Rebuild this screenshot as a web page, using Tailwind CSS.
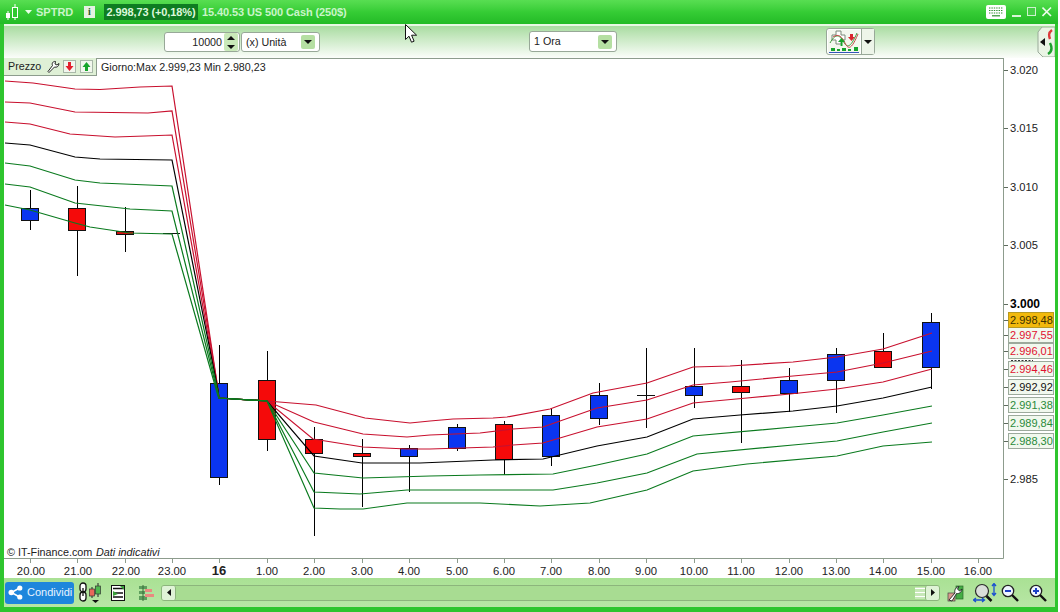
<!DOCTYPE html>
<html lang="it">
<head>
<meta charset="utf-8">
<script src="https://cdn.jsdelivr.net/npm/@tailwindcss/browser@4"></script>
<title>SPTRD</title>
</head>
<body class="bg-white overflow-hidden">
<div class="relative w-[1058px] h-[612px] flex flex-col bg-[#2ec52e] font-['Liberation_Sans',Arial,sans-serif] overflow-hidden">

  <!-- Title bar -->
  <header class="h-[24px] shrink-0 flex items-center bg-gradient-to-b from-[#58de52] via-[#35cc35] to-[#22bb26] text-[11px] font-bold text-[#c9f5c9] whitespace-nowrap">
    <svg class="ml-[5px] w-[14px] h-[18px]" viewBox="0 0 14 18">
      <path d="M3 8v9M10 1v16" stroke="#fff" stroke-width="1"/>
      <rect x="1" y="10" width="4" height="5" fill="#fff"/>
      <rect x="7.5" y="4.5" width="5" height="10" fill="#2fc92f" stroke="#fff"/>
    </svg>
    <svg class="ml-[6px] w-[7px] h-[4px]" viewBox="0 0 7 4"><path d="M0 0h7L3.500 4z" fill="#e8ffe8"/></svg>
    <span class="ml-[4px] w-[48px]">SPTRD</span>
    <span class="w-[11px] h-[12px] flex items-center justify-center bg-[#e4f2e2] text-[#2a5a2a] text-[10px] font-bold leading-none font-['Liberation_Serif',serif]">i</span>
    <span class="ml-[9px] w-[94px] h-[16px] flex items-center justify-center bg-[#0e7c22] text-[#dcf8dc] tracking-[-.1px]">2.998,73 (+0,18%)</span>
    <span class="ml-[4px] tracking-[-.1px]">15.40.53 US 500 Cash (250$)</span>
    <div class="ml-auto flex items-center">
      <svg class="w-[20px] h-[14px]" viewBox="0 0 20 14">
        <rect width="20" height="14" rx="2" fill="#fff"/>
        <path d="M3 3h14M3 5.500h14M3 8h14" stroke="#2f8f2f" stroke-width="1.200" stroke-dasharray="1.400 1"/>
        <path d="M6 10.800h8" stroke="#2f8f2f" stroke-width="1.200"/>
      </svg>
      <svg class="ml-[6px] w-[10px] h-[12px]" viewBox="0 0 10 12"><rect y="9" width="9" height="2" fill="#d8f5d8"/></svg>
      <svg class="ml-[5px] w-[10px] h-[12px]" viewBox="0 0 10 12"><rect x=".5" y="1.500" width="8" height="8" fill="#46cf46" stroke="#cdf2cd"/></svg>
      <svg class="ml-[5px] mr-[6px] w-[10px] h-[12px]" viewBox="0 0 10 12"><path d="M.5 1.500l8.500 8.500M9 1.500L.5 10" stroke="#eefcee" stroke-width="1.600"/></svg>
    </div>
  </header>

  <!-- Body framed by the green window border -->
  <div class="flex-1 min-h-0 ml-[4px] mr-[3px] mb-[5px] flex flex-col bg-white">

    <!-- Toolbar -->
    <div class="relative h-[34px] shrink-0 flex items-start border-t-[2px] border-[#e8f8e4] bg-gradient-to-b from-[#a9dca1] to-[#fbfdfa] text-[10.7px] text-[#222]">
      <div class="ml-[160px] mt-[6px] w-[76px] h-[20px] flex items-center justify-between bg-white border border-[#98a898] rounded-[3px]">
        <span class="ml-auto mr-[2px]">10000</span>
        <span class="w-[14px] h-[18px] mr-[1px] flex flex-col items-center justify-around bg-[#c9e9b9] rounded-[2px]">
          <svg class="w-[8px] h-[4px]" viewBox="0 0 8 4"><path d="M0 4h8L4 0z" fill="#111"/></svg>
          <svg class="w-[8px] h-[4px]" viewBox="0 0 8 4"><path d="M0 0h8L4 4z" fill="#111"/></svg>
        </span>
      </div>
      <div class="ml-[1px] mt-[6px] w-[79px] h-[20px] flex items-center bg-white border border-[#98a898] rounded-[3px]">
        <span class="ml-[4px]">(x) Unità</span>
        <span class="ml-auto mr-[4px] w-[14px] h-[14px] flex items-center justify-center bg-[#b5dfa2] rounded-[2px]">
          <svg class="w-[8px] h-[4px]" viewBox="0 0 8 4"><path d="M0 0h8L4 4z" fill="#111"/></svg>
        </span>
      </div>
      <div class="ml-[209px] mt-[5px] w-[88px] h-[21px] flex items-center bg-white border border-[#98a898] rounded-[3px]">
        <span class="ml-[4px]">1 Ora</span>
        <span class="ml-auto mr-[4px] w-[14px] h-[14px] flex items-center justify-center bg-[#b5dfa2] rounded-[2px]">
          <svg class="w-[8px] h-[4px]" viewBox="0 0 8 4"><path d="M0 0h8L4 4z" fill="#111"/></svg>
        </span>
      </div>
      <div class="ml-[209px] mt-[2px] h-[27px] flex bg-white border border-[#98a898] rounded-[3px]">
        <svg class="w-[34px] h-[25px]" viewBox="0 0 34 25">
          <rect x="1" y="1" width="32" height="23" fill="#f3f8ef"/>
          <path d="M9 2h5v4h4v5h-4v4H9v-4H5V6h4z" fill="#fff" stroke="#7a8a7a"/>
          <path d="M3 14c5-9 9-9 13-2s7 8 14-8" fill="none" stroke="#3b9c3b"/>
          <path d="M6 8c6-4 9 0 12 6s6 8 13-9" fill="none" stroke="#c64a4a"/>
          <path d="M14 13l-3 0 3.500-4 3.500 4h-2.500v4h-2z" fill="#17a52c"/>
          <path d="M23 5h3v3h2l-3.500 4L21 8h2z" fill="#d8252d"/>
          <path d="M4 19h4v3H4zM10 20h3v2h-3zM15 19h4v3h-4zM21 20h3v2h-3zM27 18h4v4h-4z" fill="#18a52e"/>
          <path d="M2 23.500h30" stroke="#3357b8"/>
        </svg>
        <span class="w-[13px] flex items-center justify-center border-l border-[#98a898] bg-[#edf5e9]">
          <svg class="w-[8px] h-[4px]" viewBox="0 0 8 4"><path d="M0 0h8L4 4z" fill="#111"/></svg>
        </span>
      </div>
      <svg class="absolute right-0 top-[1px] w-[18px] h-[30px]" viewBox="0 0 18 30">
        <path d="M18 0H5L1 5v20l5 5h12z" fill="#eaf5e5" stroke="#9aaa9a"/>
        <path d="M3 15l5-4v8z" fill="#111"/>
        <path d="M15 3c-4 3-3 6-2 9" fill="none" stroke="#dc3a3a" stroke-width="2.400"/>
        <path d="M11 27c5-3 4-7 2-11" fill="none" stroke="#1e9f2f" stroke-width="2.400"/>
      </svg>
    </div>

    <!-- Chart and axes -->
    <div class="relative flex-1 min-h-0">
      <svg class="absolute inset-0 w-[1051px] h-[520px]" viewBox="4 58 1051 520" font-family="Liberation Sans, Arial, sans-serif">
        <!-- frame -->
        <path d="M1003.500 58V558.500H4" fill="none" stroke="#8d9c8d"/>
        <path d="M4 58.500H1003" stroke="#8d9c8d"/>
        <!-- price ticks -->
        <g stroke="#5e6b5e">
          <path d="M1004 70.500h4M1004 128.500h4M1004 187.500h4M1004 245.500h4M1004 304.500h4M1004 320.500h4M1004 335.500h4M1004 351.500h4M1004 369.500h4M1004 387.500h4M1004 405.500h4M1004 423.500h4M1004 441.500h4M1004 479.500h4"/>
        </g>
        <!-- time ticks -->
        <path d="M30.500 559v4M77.500 559v4M125.500 559v4M172.500 559v4M219.500 559v4M267.500 559v4M314.500 559v4M362.500 559v4M409.500 559v4M457.500 559v4M504.500 559v4M551.500 559v4M599.500 559v4M646.500 559v4M694.500 559v4M741.500 559v4M789.500 559v4M836.500 559v4M883.500 559v4M931.500 559v4M978.500 559v4" stroke="#8d9c8d"/>

        <!-- wicks -->
        <path stroke="#000" stroke-width="1" d="M30.500 190V230M77.500 186V276M125.500 207V252M219.500 345V485M267.500 351V451M314.500 427V536M362.500 439V507M409.500 445V492M457.500 424V451M504.500 421V475M551.500 408V466M599.500 383V425M646.500 348V428M694.500 348V408M741.500 360V443M789.500 368V412M836.500 348V413M883.500 333V352M931.500 313V389"/>

        <!-- candles -->
        <g stroke="#111" stroke-width="1">
          <rect x="21.500" y="208.500" width="17" height="12" fill="#0a35f0"/>
          <rect x="68.500" y="208.500" width="17" height="22" fill="#f50a0a"/>
          <rect x="116.500" y="231.500" width="17" height="3" fill="#d01010"/>
          <rect x="210.500" y="383.500" width="17" height="94" fill="#0a35f0"/>
          <rect x="258.500" y="380.500" width="17" height="59" fill="#f50a0a"/>
          <rect x="305.500" y="439.500" width="17" height="14" fill="#f50a0a"/>
          <rect x="353.500" y="453.500" width="17" height="3" fill="#f50a0a"/>
          <rect x="400.500" y="448.500" width="17" height="8" fill="#0a35f0"/>
          <rect x="448.500" y="427.500" width="17" height="21" fill="#0a35f0"/>
          <rect x="495.500" y="424.500" width="17" height="35" fill="#f50a0a"/>
          <rect x="542.500" y="415.500" width="17" height="41" fill="#0a35f0"/>
          <rect x="590.500" y="395.500" width="17" height="23" fill="#0a35f0"/>
          <rect x="685.500" y="386.500" width="17" height="9" fill="#0a35f0"/>
          <rect x="732.500" y="386.500" width="17" height="6" fill="#f50a0a"/>
          <rect x="780.500" y="380.500" width="17" height="13" fill="#0a35f0"/>
          <rect x="827.500" y="354.500" width="17" height="26" fill="#0a35f0"/>
          <rect x="874.500" y="351.500" width="17" height="16" fill="#f50a0a"/>
          <rect x="922.500" y="322.500" width="17" height="45" fill="#0a35f0"/>
        </g>
        <path stroke="#111" d="M163 233.500H180M637 395.500H655"/>

        <!-- bands -->
        <g fill="none" stroke-width="1.200">
          <g stroke="#c8102e">
            <polyline points="5,81 33,83 75,89 100,89.500 140,87 172,86 217,383 219,398 267,401 316,405 365,418 410,423 430,421 453,419 493,418 507,417 550,409 593,393 647,383 693,367 730,366 793,362 837,357 883,349 932,333"/>
            <polyline points="5,102 30,103 75,112 148,113 172,111 217,383 219,398 267,401 314,422 363,434 407,437 430,435 480,433 513,429 543,427 597,408 647,400 693,385 730,382 793,376 837,372 883,363 932,351"/>
            <polyline points="5,122 30,124 70,134 115,137 145,136 172,135 217,385 219,398 267,401 313,439 363,447 407,449 430,449 493,447 513,445 543,443 597,427 647,419 693,403 747,398 790,394 837,389 883,382 932,369"/>
          </g>
          <polyline stroke="#000" points="5,143 30,145 75,157 100,159 172,160 218,390 219,398 267,401 314,456 362,463 420,463 493,460 543,459 597,446 647,437 693,419 740,415 793,411 837,406 883,398 932,387"/>
          <g stroke="#0a7a1e">
            <polyline points="5,163 30,166 75,180 100,183 172,186 218,392 219,398 267,401 314,473 363,478 430,476 480,475 553,474 597,465 647,454 693,436 793,427 837,423 883,415 932,406"/>
            <polyline points="5,184 30,187 75,203 130,209 172,211 218,394 219,398 267,401 314,492 360,494 407,490 553,490 597,483 647,473 697,454 793,445 837,441 883,432 932,423"/>
            <polyline points="5,205 30,210 75,223 90,227 130,233 172,234 218,396 219,398 267,401 314,508 340,509 363,509 407,503 480,503 540,506 590,503 647,490 693,471 747,464 837,456 883,446 932,442"/>
          </g>
        </g>

        <!-- axis numbers -->
        <g font-size="11.200" fill="#222">
          <text x="1010" y="74">3.020</text>
          <text x="1010" y="132">3.015</text>
          <text x="1010" y="191">3.010</text>
          <text x="1010" y="249">3.005</text>
          <text x="1010" y="308" font-weight="700" font-size="12" fill="#000">3.000</text>
          <text x="1010" y="483">2.985</text>
        </g>
        <!-- the hidden 2.995 shows only as a sliver between two labels -->
        <path d="M1011 360.500h22" stroke="#333" stroke-dasharray="2 1.500"/>

        <!-- price labels -->
        <g font-size="11" stroke-width="1">
          <g stroke="#9caa9c" fill="#f1f8ee">
            <rect x="1008.500" y="343.500" width="45" height="15" />
            <rect x="1008.500" y="361.500" width="45" height="15" />
            <rect x="1008.500" y="327.500" width="45" height="15" />
            <rect x="1008.500" y="379.500" width="45" height="15" />
            <rect x="1008.500" y="397.500" width="45" height="15" />
            <rect x="1008.500" y="415.500" width="45" height="15" />
            <rect x="1008.500" y="433.500" width="45" height="15" />
            <rect x="1008.500" y="312.500" width="45" height="15" fill="#f2b90c" stroke="#b89a20"/>
          </g>
          <text x="1010" y="324" fill="#3b3000">2.998,48</text>
          <text x="1010" y="339" fill="#e01030">2.997,55</text>
          <text x="1010" y="355" fill="#e01030">2.996,01</text>
          <text x="1010" y="373" fill="#e01030">2.994,46</text>
          <text x="1010" y="391" fill="#111">2.992,92</text>
          <text x="1010" y="409" fill="#2a8a3a">2.991,38</text>
          <text x="1010" y="427" fill="#2a8a3a">2.989,84</text>
          <text x="1010" y="445" fill="#2a8a3a">2.988,30</text>
        </g>

        <!-- time labels -->
        <g font-size="11.300" fill="#222" text-anchor="middle">
          <text x="31" y="575">20.00</text>
          <text x="78" y="575">21.00</text>
          <text x="126" y="575">22.00</text>
          <text x="172" y="575">23.00</text>
          <text x="219" y="575" font-weight="700" font-size="13">16</text>
          <text x="267" y="575">1.00</text>
          <text x="314" y="575">2.00</text>
          <text x="362" y="575">3.00</text>
          <text x="409" y="575">4.00</text>
          <text x="457" y="575">5.00</text>
          <text x="504" y="575">6.00</text>
          <text x="551" y="575">7.00</text>
          <text x="599" y="575">8.00</text>
          <text x="646" y="575">9.00</text>
          <text x="694" y="575">10.00</text>
          <text x="741" y="575">11.00</text>
          <text x="789" y="575">12.00</text>
          <text x="836" y="575">13.00</text>
          <text x="883" y="575">14.00</text>
          <text x="931" y="575">15.00</text>
          <text x="978" y="575">16.00</text>
        </g>
        <text x="7" y="556" font-size="10.800" fill="#222">© IT-Finance.com</text>
        <text x="96" y="556" font-size="10.800" font-style="italic" fill="#222">Dati indicativi</text>
      </svg>

      <!-- Price tab over the chart -->
      <div class="absolute left-0 top-0 flex items-center whitespace-nowrap">
        <div class="w-[93px] h-[18px] flex items-center bg-[#dff0d6] border-r border-b border-[#8d9c8d] text-[10.700px] text-[#222]">
          <span class="ml-[4px] w-[34px]">Prezzo</span>
          <svg class="ml-[5px] w-[13px] h-[13px]" viewBox="0 0 13 13"><path d="M1 11.500l1 1 5.500-5.500c2 .8 4.500-.5 4.500-3.500l-2 1.500-2-1 .5-2.500C6 1 4.500 3.500 5.500 5.500z" fill="#fff" stroke="#111" stroke-width=".9"/></svg>
          <svg class="ml-[3px] w-[13px] h-[13px]" viewBox="0 0 13 13"><rect x=".5" y=".5" width="12" height="12" fill="#f2f7ee" stroke="#a9b8a9"/><path d="M5 2h3v4h2.500L6.500 11 2.500 6H5z" fill="#e3202d"/></svg>
          <svg class="ml-[4px] w-[13px] h-[13px]" viewBox="0 0 13 13"><rect x=".5" y=".5" width="12" height="12" fill="#f2f7ee" stroke="#a9b8a9"/><path d="M5 11h3V7h2.500L6.500 2 2.500 7H5z" fill="#17a52c"/></svg>
        </div>
        <span class="ml-[4px] text-[10.700px] text-[#222]">Giorno:Max 2.999,23 Min 2.980,23</span>
      </div>
    </div>

    <!-- Bottom toolbar -->
    <div class="h-[29px] shrink-0 flex items-center bg-gradient-to-b from-[#a9e194] to-[#b8e6a5] text-[11px] whitespace-nowrap">
      <div class="ml-[1px] w-[69px] h-[22px] flex items-center bg-[#1e86dc] rounded-[3px] text-[#e8f4ff]">
        <svg class="ml-[3px] w-[15px] h-[15px]" viewBox="0 0 15 15"><path d="M11.500 3L3.500 7.500l8 4.500" fill="none" stroke="#fff" stroke-width="1.500"/><circle cx="11.800" cy="3" r="2.600" fill="#fff"/><circle cx="3.300" cy="7.500" r="2.800" fill="#fff"/><circle cx="11.800" cy="12" r="2.600" fill="#fff"/></svg>
        <span class="ml-[4px]">Condividi</span>
      </div>
      <svg class="ml-[5px] w-[23px] h-[21px]" viewBox="0 0 23 21">
        <rect x="1" y="1" width="6" height="9" rx="3" fill="#fff" stroke="#111" stroke-width="1.300"/>
        <rect x="1" y="10" width="6" height="9" rx="3" fill="#fff" stroke="#111" stroke-width="1.300"/>
        <path d="M4 6v8" stroke="#111" stroke-width="1.300"/>
        <path d="M13 5v11M19 1v14" stroke="#222"/>
        <rect x="10.500" y="7" width="5" height="7" fill="#e8695a" stroke="#333" stroke-width=".7"/>
        <rect x="16.500" y="4" width="5" height="8" fill="#4fb84f" stroke="#333" stroke-width=".7"/>
        <path d="M13 18h7l-3.500 3z" fill="#111"/>
      </svg>
      <svg class="ml-[9px] w-[14px] h-[16px]" viewBox="0 0 14 16">
        <rect x=".5" y=".5" width="13" height="15" fill="#fff" stroke="#111"/>
        <path d="M2 3.500h10M2 8h10M2 12h10" stroke="#111" stroke-width="1.400"/>
        <path d="M9 1h4v4zM2 6l5 3-5 2z" fill="#3aa13a"/>
      </svg>
      <svg class="ml-[13px] w-[17px] h-[16px]" viewBox="0 0 17 16">
        <path d="M1 1h8v3H1zM1 6h6v3H1zM1 11h8v4H1z" fill="#5d9e5d"/>
        <path d="M7 4h7v3H7zM7 9h9v3H7z" fill="#e88a80"/>
        <path d="M5 0v16" stroke="#3a6a3a"/>
      </svg>
      <!-- scrollbar -->
      <div class="ml-[6px] w-[779px] h-[16px] flex items-center bg-[#a8dc92] border border-[#8cb57c] rounded-[3px]">
        <span class="w-[14px] h-[14px] flex items-center justify-center bg-[#dff3d6] border-r border-[#8cb57c] rounded-[2px]">
          <svg class="w-[4px] h-[7px]" viewBox="0 0 4 7"><path d="M4 0v7L0 3.500z" fill="#111"/></svg>
        </span>
        <span class="ml-auto w-[10px] h-[12px] flex flex-col justify-around bg-[#c7e8b8]">
          <i class="h-px bg-white"></i><i class="h-px bg-white"></i><i class="h-px bg-white"></i>
        </span>
        <span class="w-[14px] h-[14px] flex items-center justify-center bg-[#dff3d6] border-l border-[#8cb57c] rounded-[2px]">
          <svg class="w-[4px] h-[7px]" viewBox="0 0 4 7"><path d="M0 0v7l4-3.500z" fill="#111"/></svg>
        </span>
      </div>
      <svg class="ml-[7px] w-[17px] h-[19px]" viewBox="0 0 17 19">
        <rect x="1" y="10" width="7" height="8" fill="#d99a8c" stroke="#444" stroke-width=".7"/>
        <rect x="9" y="3" width="7" height="13" fill="#45ad45" stroke="#2a6a2a" stroke-width=".7"/>
        <path d="M2 17l6-7c-1-3 1-6 4-6.500L10.500 6l2 2 2.500-2c0 3-3 5-5.500 4.500L5 18z" fill="#fff" stroke="#222" stroke-width=".9"/>
      </svg>
      <svg class="ml-[9px] w-[25px] h-[20px]" viewBox="0 0 25 20">
        <circle cx="9" cy="8" r="6.500" fill="#d9ded9" stroke="#2a2a2a" stroke-width="1.200"/>
        <path d="M13.500 13l5 5" stroke="#111" stroke-width="2.500"/>
        <path d="M21 1v11M19 3l2-2.500L23 3M19 10l2 2.500L23 10M1 17h10M3 15l-2.500 2L3 19M9 15l2.500 2L9 19" fill="none" stroke="#1b50d0" stroke-width="1.300"/>
      </svg>
      <svg class="ml-[3px] w-[18px] h-[18px]" viewBox="0 0 18 18">
        <circle cx="7" cy="7" r="5.700" fill="#eef5ff" stroke="#222" stroke-width="1.300"/>
        <path d="M11 11l6 6" stroke="#111" stroke-width="2.400"/>
        <path d="M4 7h6" stroke="#1b3fc4" stroke-width="2"/>
      </svg>
      <svg class="ml-[10px] w-[18px] h-[18px]" viewBox="0 0 18 18">
        <circle cx="7" cy="7" r="5.700" fill="#eef5ff" stroke="#222" stroke-width="1.300"/>
        <path d="M11 11l6 6" stroke="#111" stroke-width="2.400"/>
        <path d="M4 7h6M7 4v6" stroke="#1b3fc4" stroke-width="2"/>
      </svg>
    </div>
  </div>

  <!-- Mouse pointer -->
  <svg class="absolute left-[405px] top-[24px] w-[13px] h-[20px]" viewBox="0 0 13 20">
    <path d="M.5.500v15l3.500-3.300 2.500 6 2.600-1-2.500-6h5z" fill="#fff" stroke="#111"/>
  </svg>
</div>
</body>
</html>
